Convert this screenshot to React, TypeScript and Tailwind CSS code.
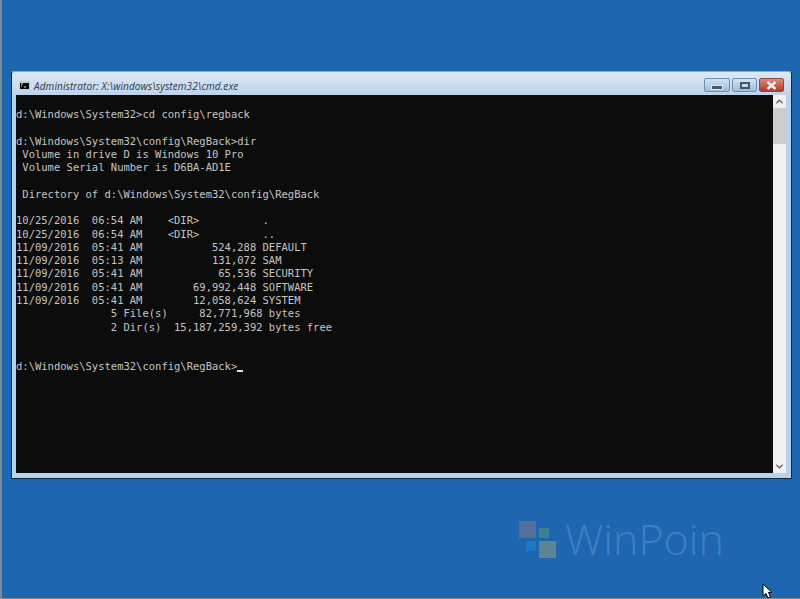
import { ChevronDown, ChevronUp } from "lucide-react";

const lines = [
  "",
  "d:\\Windows\\System32>cd config\\regback",
  "",
  "d:\\Windows\\System32\\config\\RegBack>dir",
  " Volume in drive D is Windows 10 Pro",
  " Volume Serial Number is D6BA-AD1E",
  "",
  " Directory of d:\\Windows\\System32\\config\\RegBack",
  "",
  "10/25/2016  06:54 AM    <DIR>          .",
  "10/25/2016  06:54 AM    <DIR>          ..",
  "11/09/2016  05:41 AM           524,288 DEFAULT",
  "11/09/2016  05:13 AM           131,072 SAM",
  "11/09/2016  05:41 AM            65,536 SECURITY",
  "11/09/2016  05:41 AM        69,992,448 SOFTWARE",
  "11/09/2016  05:41 AM        12,058,624 SYSTEM",
  "               5 File(s)     82,771,968 bytes",
  "               2 Dir(s)  15,187,259,392 bytes free",
  "",
  "",
];

function CmdIcon() {
  return (
    <svg width="11" height="9" viewBox="0 0 11 9" className="shrink-0">
      <rect width="11" height="9" fill="#c9c9c9" />
      <rect x="1" y="2" width="9" height="6" fill="#0c0c0c" />
      <path d="M2 3h2M2 5h1M5 6h2" stroke="#e0e0e0" strokeWidth="1" />
    </svg>
  );
}

function CaptionButtons() {
  return (
    <div className="flex gap-[1px] mt-[-1px]">
      <div className="w-[26px] h-[14px] mr-[1px] rounded-[2px] border border-[#6f8fb0] bg-gradient-to-b from-[#d3e2f2] to-[#9fbddd] flex items-center justify-center">
        <div className="w-[10px] h-[3px] mt-[4px] bg-[#4a5a6c] border border-[#dfe7ef] box-content" />
      </div>
      <div className="w-[25px] h-[14px] mr-[1px] rounded-[2px] border border-[#6f8fb0] bg-gradient-to-b from-[#d3e2f2] to-[#9fbddd] flex items-center justify-center">
        <div className="w-[10px] h-[7px] border-2 border-[#46566a] bg-[#c7d8ea]" />
      </div>
      <div className="w-[25px] h-[14px] rounded-[2px] border border-[#8c4a44] bg-gradient-to-b from-[#d98a7e] to-[#b5362a] flex items-center justify-center">
        <svg width="11" height="9" viewBox="0 0 11 9">
          <path d="M1.5 1 L9.5 8 M9.5 1 L1.5 8" stroke="#f3eeee" strokeWidth="2.4" />
        </svg>
      </div>
    </div>
  );
}

export default function App() {
  return (
    <div className="relative w-[800px] h-[599px] overflow-hidden bg-[#1f66b1] border-l-2 border-b border-[#7d8a96]">
      <div className="ml-[9px] mt-[71px] w-[781px] h-[408px] rounded-t-[3px] border border-[#0e2a3c] border-t-[#8fa9c4] bg-[#b7d0ec] flex flex-col">
        <div className="h-[23px] shrink-0 rounded-t-[3px] bg-gradient-to-b from-[#dfe9f4] to-[#bdd3ec] pl-[7px] pr-[7px] pt-[7px] flex items-start justify-between">
          <div className="flex items-center gap-[4px] h-[13px]">
            <CmdIcon />
            <span className="text-[10px] italic text-[#2d3a46] leading-none tracking-[0.1px] font-['Open_Sans',sans-serif]">
              Administrator: X:\windows\system32\cmd.exe
            </span>
          </div>
          <CaptionButtons />
        </div>
        <div className="flex flex-1 ml-[4px] mr-[5px] mb-[5px] min-h-0">
          <div className="flex-1 bg-[#0c0c0c] overflow-hidden">
            {lines.map((line, i) => (
              <pre
                key={i}
                className="h-[13.27px] text-[10.5px] leading-[13.27px] text-[#c4c4c4] font-['DejaVu_Sans_Mono',monospace]"
              >
                {line}
              </pre>
            ))}
            <pre className="h-[13.27px] text-[10.5px] leading-[13.27px] text-[#c4c4c4] font-['DejaVu_Sans_Mono',monospace]">
              d:\Windows\System32\config\RegBack&gt;
              <span className="inline-block w-[6px] h-[2px] bg-[#e0e0e0] align-[-2px]" />
            </pre>
          </div>
          <div className="w-[13px] shrink-0 bg-[#f0f0f0] flex flex-col">
            <div className="h-[13px] flex items-center justify-center">
              <ChevronUp size={11} strokeWidth={3} color="#555555" />
            </div>
            <div className="h-[36px] bg-[#cdcdcd]" />
            <div className="flex-1" />
            <div className="h-[13px] flex items-center justify-center">
              <ChevronDown size={11} strokeWidth={3} color="#555555" />
            </div>
          </div>
        </div>
      </div>

      {/* watermark */}
      <div className="absolute left-[517px] top-[521px] flex items-start opacity-90">
        <div className="grid grid-cols-[17px_17px] gap-[3px] w-[37px]">
          <div className="w-[17px] h-[17px] bg-[#5c6f9c]" />
          <div className="w-[10px] h-[10px] mt-[7px] bg-[#3d8588]" />
          <div className="w-[10px] h-[10px] ml-[7px] bg-[#1a7dcc]" />
          <div className="w-[17px] h-[17px] bg-[#65878f]" />
        </div>
        <span className="ml-[9px] mt-[-8px] text-[43px] font-light leading-[52px] text-[#4481c2] font-['Open_Sans',sans-serif]">
          WinPoin
        </span>
      </div>

      {/* mouse pointer */}
      <svg className="absolute left-[760px] top-[583px]" width="13" height="17" viewBox="0 0 13 17">
        <path d="M1 1 L1 13 L4 10.5 L6 15 L8.5 14 L6.5 9.5 L10 9.5 Z" fill="#ffffff" stroke="#000000" strokeWidth="1" />
      </svg>
    </div>
  );
}
